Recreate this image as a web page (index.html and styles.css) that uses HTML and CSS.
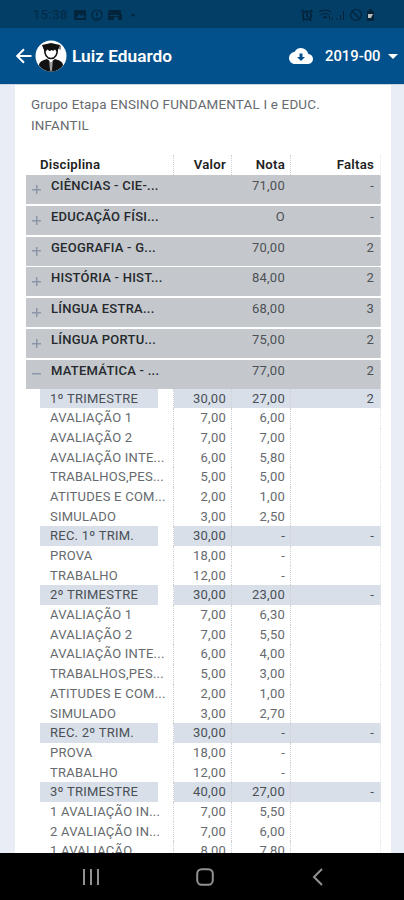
FILE: index.html
```html
<!DOCTYPE html>
<html lang="pt-BR">

<head>
  <meta charset="UTF-8">
  <meta name="viewport" content="width=device-width, initial-scale=1.0">
  <title>Notas</title>
  <link rel="stylesheet" href="styles.css">
</head>

<body>
  <div class="statusbar">
    <span class="clock">15:38</span>
    <svg class="status-left" width="66" height="14" viewBox="0 0 66 14">
      <rect x="1" y="2" width="12" height="10" rx="1" />
      <path class="cut" d="M3 10l3-4 2 2 2-2 2 4z" />
      <circle class="line" cx="24" cy="7" r="5" />
      <path class="line" d="M24 4v4M23 10h2" />
      <path d="M36 2h12v4h1v6h-4V9h-4v3h-6V6z" />
      <path class="cut" d="M37 7h9v1h-9z" />
      <circle cx="60" cy="7" r="1.5" />
    </svg>
    <svg class="status-right" width="78" height="14" viewBox="0 0 78 14">
      <circle class="bold" cx="11" cy="7.5" r="4.2" />
      <path class="bold" d="M11 5v3l2 1M5.500 4l2-2M16.500 4l-2-2M8 11l-1 2M14 11l1 2" />
      <path class="line" d="M23 4q6-4 12 0M25 7q4-3 8 0M27 10q2-2 4 0" />
      <path d="M33 12V8h1v4zM36 12V9h1v3zM40 12v-2h1v2zM44 12V7h1v5zM47 12V3h1v9z" />
      <circle class="line" cx="60" cy="7" r="5.500" />
      <path class="line" d="M56 3l8 8" />
      <path d="M71 3h2V1h3v2h2v10h-7z" />
      <path class="charge" d="M72 6h5l-2 4h-3z" />
    </svg>
  </div>

  <header class="appbar">
    <svg class="back" width="16" height="16" viewBox="0 0 16 16">
      <path d="M15.500 8H1.500M8 1.200L1.200 8L8 14.800" />
    </svg>
    <svg class="avatar" width="32" height="32" viewBox="0 0 32 32">
      <circle cx="16" cy="16" r="15.500" fill="#fff" />
      <path d="M7 5l9-2 9 2-1.500 4h-15z" fill="#111" />
      <path d="M9.500 8c0 7 1.500 10.500 6.500 10.500s6.500-3.500 6.500-10.500" fill="none" stroke="#111" stroke-width="1.500" />
      <path d="M10 8v4l2.500-2.500q2 2.500 4 .5q2 1.500 3.500-.5L22 12V8z" fill="#111" />
      <path d="M25 5.500v4" fill="none" stroke="#111" stroke-width="1" />
      <path d="M4 25.500c0-4 4-5.500 8-6.500l4 3 4-3c4 1 8 2.500 8 6.500a15 15 0 0 1-24 0z" fill="#111" />
      <path d="M14.500 21h3l-.5 9.500h-2z" fill="#fff" />
      <path d="M16 22v8" stroke="#111" stroke-width=".8" />
    </svg>
    <h1>Luiz Eduardo</h1>
    <svg class="cloud" width="24" height="24" viewBox="0 0 24 24">
      <path d="M19.350 10.040A7.490 7.490 0 0 0 12 4C9.110 4 6.600 5.640 5.350 8.040A5.994 5.994 0 0 0 0 14c0 3.310 2.690 6 6 6h13c2.760 0 5-2.240 5-5 0-2.640-2.050-4.780-4.650-4.960zM16 13l-4 4-4-4h2.500V9.500h3V13z" />
    </svg>
    <span class="period">2019-00</span>
    <span class="caret"></span>
  </header>

  <main>
    <section class="card">
      <p class="group">Grupo Etapa ENSINO FUNDAMENTAL I e EDUC. INFANTIL</p>

      <div class="grades">
        <div class="row head"><b>Disciplina</b><b>Valor</b><b>Nota</b><b>Faltas</b></div>

        <div class="row subject"><span><i class="plus"></i>CIÊNCIAS - CIE-...</span><span></span><span>71,00</span><span>-</span></div>
        <div class="row subject"><span><i class="plus"></i>EDUCAÇÃO FÍSI...</span><span></span><span>O</span><span>-</span></div>
        <div class="row subject"><span><i class="plus"></i>GEOGRAFIA - G...</span><span></span><span>70,00</span><span>2</span></div>
        <div class="row subject"><span><i class="plus"></i>HISTÓRIA - HIST...</span><span></span><span>84,00</span><span>2</span></div>
        <div class="row subject"><span><i class="plus"></i>LÍNGUA ESTRA...</span><span></span><span>68,00</span><span>3</span></div>
        <div class="row subject"><span><i class="plus"></i>LÍNGUA PORTU...</span><span></span><span>75,00</span><span>2</span></div>
        <div class="row subject"><span><i class="plus minus"></i>MATEMÁTICA - ...</span><span></span><span>77,00</span><span>2</span></div>

        <div class="row term"><span>1º TRIMESTRE</span><span>30,00</span><span>27,00</span><span>2</span></div>
        <div class="row"><span>AVALIAÇÃO 1</span><span>7,00</span><span>6,00</span><span></span></div>
        <div class="row"><span>AVALIAÇÃO 2</span><span>7,00</span><span>7,00</span><span></span></div>
        <div class="row"><span>AVALIAÇÃO INTE...</span><span>6,00</span><span>5,80</span><span></span></div>
        <div class="row"><span>TRABALHOS,PES...</span><span>5,00</span><span>5,00</span><span></span></div>
        <div class="row"><span>ATITUDES E COM...</span><span>2,00</span><span>1,00</span><span></span></div>
        <div class="row"><span>SIMULADO</span><span>3,00</span><span>2,50</span><span></span></div>

        <div class="row term"><span>REC. 1º TRIM.</span><span>30,00</span><span>-</span><span>-</span></div>
        <div class="row"><span>PROVA</span><span>18,00</span><span>-</span><span></span></div>
        <div class="row"><span>TRABALHO</span><span>12,00</span><span>-</span><span></span></div>

        <div class="row term"><span>2º TRIMESTRE</span><span>30,00</span><span>23,00</span><span>-</span></div>
        <div class="row"><span>AVALIAÇÃO 1</span><span>7,00</span><span>6,30</span><span></span></div>
        <div class="row"><span>AVALIAÇÃO 2</span><span>7,00</span><span>5,50</span><span></span></div>
        <div class="row"><span>AVALIAÇÃO INTE...</span><span>6,00</span><span>4,00</span><span></span></div>
        <div class="row"><span>TRABALHOS,PES...</span><span>5,00</span><span>3,00</span><span></span></div>
        <div class="row"><span>ATITUDES E COM...</span><span>2,00</span><span>1,00</span><span></span></div>
        <div class="row"><span>SIMULADO</span><span>3,00</span><span>2,70</span><span></span></div>

        <div class="row term"><span>REC. 2º TRIM.</span><span>30,00</span><span>-</span><span>-</span></div>
        <div class="row"><span>PROVA</span><span>18,00</span><span>-</span><span></span></div>
        <div class="row"><span>TRABALHO</span><span>12,00</span><span>-</span><span></span></div>

        <div class="row term"><span>3º TRIMESTRE</span><span>40,00</span><span>27,00</span><span>-</span></div>
        <div class="row"><span>1 AVALIAÇÃO IN...</span><span>7,00</span><span>5,50</span><span></span></div>
        <div class="row"><span>2 AVALIAÇÃO IN...</span><span>7,00</span><span>6,00</span><span></span></div>
        <div class="row"><span>1 AVALIAÇÃO</span><span>8,00</span><span>7,80</span><span></span></div>
      </div>
    </section>
  </main>

  <nav class="navbar">
    <svg width="18" height="18" viewBox="0 0 18 18"><path d="M2 1v16M9 1v16M16 1v16" /></svg>
    <svg width="18" height="18" viewBox="0 0 18 18"><rect x="1.200" y="1.200" width="15.600" height="15.600" rx="4.500" /></svg>
    <svg width="18" height="18" viewBox="0 0 18 18"><path d="M13 1L5 9l8 8" /></svg>
  </nav>
</body>

</html>
```
FILE: styles.css
```css
* {
  box-sizing: border-box;
}

body {
  margin: 0;
  height: 900px;
  display: flex;
  flex-direction: column;
  overflow: hidden;
  font-family: Roboto, "Liberation Sans", sans-serif;
  font-size: 13px;
  color: #666a6e;
  background: #e9edf5;
}

.statusbar {
  flex: none;
  height: 28px;
  display: flex;
  align-items: center;
  padding: 1px 30px 0 33px;
  color: #032a45;
  background: #023e66;
}

.clock {
  width: 40px;
  font-size: 13px;
  letter-spacing: 0.5px;
}

.statusbar svg {
  fill: #03243b;
}

.statusbar .line,
.statusbar .bold {
  fill: none;
  stroke: #03243b;
  stroke-width: 1.2;
}

.statusbar .bold {
  stroke-width: 1.8;
}

.statusbar .cut {
  fill: #023e66;
}

.statusbar .charge {
  fill: #b9bcbe;
}

.status-right {
  margin-left: auto;
}

.appbar {
  flex: none;
  height: 56px;
  display: flex;
  align-items: center;
  padding: 0 6px 0 16px;
  color: #fff;
  background: #02518c;
}

.back {
  fill: none;
  stroke: #fff;
  stroke-width: 2;
}

.avatar {
  margin: 0 5px 0 3px;
}

h1 {
  margin: 0;
  font-size: 17.3px;
  font-weight: 600;
}

.cloud {
  margin-left: auto;
  fill: #fff;
}

.period {
  width: 56px;
  margin-left: 12px;
  font-size: 14.8px;
  font-weight: 500;
  white-space: nowrap;
}

.caret {
  margin-left: 7px;
  border: 5px solid transparent;
  border-top-color: #fff;
  border-bottom: 0;
}

main {
  flex: 1;
  min-height: 0;
  overflow: hidden;
  padding: 0 13px 0 15px;
  border-top: 1px solid #cbd6e4;
}

.card {
  padding: 10px 10px 0 11px;
  background: #fff;
}

.group {
  margin: 0 0 19px;
  padding: 0 40px 0 5px;
  font-size: 13.4px;
  line-height: 20.5px;
  letter-spacing: 0.2px;
}

/* the last column ends on the edge of the subject rows */
.row {
  display: grid;
  grid-template-columns: 148px 58px 59px 90px;
  height: 19.7px;
  line-height: 19.7px;
  letter-spacing: 0.25px;
  white-space: nowrap;
}

.row > * {
  padding-right: 5px;
  text-align: right;
  border-right: 1px dotted #cdd0d3;
}

.row > :last-child {
  padding-right: 6px;
  border-right-color: #e4e6e8;
}

.row > :first-child {
  padding: 0 0 0 24px;
  text-align: left;
}

.head {
  height: 20px;
  line-height: 19px;
  font-size: 13.2px;
  color: #222;
}

.head b {
  font-weight: 600;
}

.head > :first-child {
  padding-left: 14px;
}

.subject {
  height: 29px;
  line-height: 22px;
  margin-bottom: 1.75px;
  color: #4d5155;
  background: #c4c8cc;
}

.subject:has(.minus) {
  margin-bottom: 0;
}

.subject > * {
  border-right-color: transparent;
}

.subject > :first-child {
  display: flex;
  padding-left: 6px;
  font-weight: 500;
  color: #26292c;
}

.plus {
  width: 9px;
  height: 9px;
  margin: 10px 10px 0 0;
  background:
    linear-gradient(#8b97a8, #8b97a8) center / 9px 1.5px no-repeat,
    linear-gradient(#8b97a8, #8b97a8) center / 1.5px 9px no-repeat;
}

.minus {
  background: linear-gradient(#8b97a8, #8b97a8) center / 9px 1.5px no-repeat;
}

.term {
  color: #4a4f55;
}

.term > * {
  background: #d8dfe9;
}

.term > :first-child {
  padding-left: 24px;
  background: linear-gradient(#d8dfe9, #d8dfe9) 14px 0 / 118px 100% no-repeat;
}

.navbar {
  flex: none;
  height: 47px;
  display: flex;
  align-items: center;
  justify-content: space-between;
  padding: 0 77px 0 82px;
  background: #000;
}

.navbar svg {
  fill: none;
  stroke: #929292;
  stroke-width: 2;
}
```
